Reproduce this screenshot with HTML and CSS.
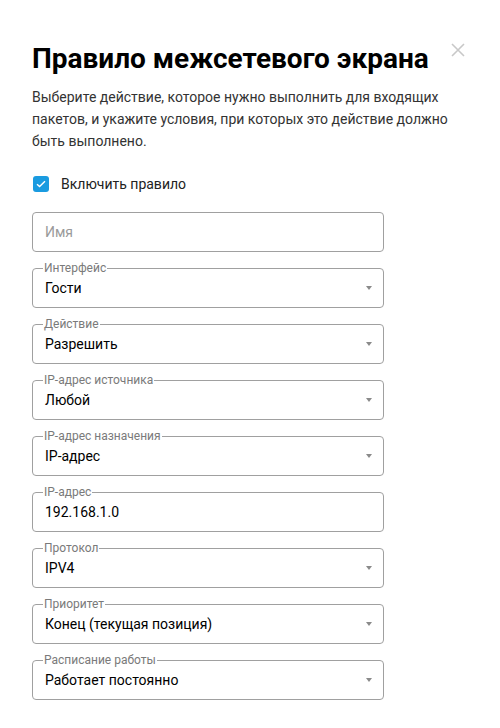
FILE: index.html
```html
<!DOCTYPE html>
<html lang="ru">
<head>
<meta charset="utf-8">
<title>Правило межсетевого экрана</title>
<link rel="stylesheet" href="styles.css">
</head>
<body>
<div class="dialog">
  <button class="close" aria-label="Закрыть">
    <svg width="14" height="14" viewBox="0 0 14 14"><path d="M1 1L13 13M13 1L1 13" stroke="#c8c8c8" stroke-width="1.6" fill="none"/></svg>
  </button>
  <h1 class="title">Правило межсетевого экрана</h1>
  <p class="desc">Выберите действие, которое нужно выполнить для входящих пакетов, и укажите условия, при которых это действие должно быть выполнено.</p>
  <label class="check">
    <span class="box"><svg width="10" height="8" viewBox="0 0 10 8"><path d="M1 4.2L3.6 6.6L9 1.2" stroke="#fff" stroke-width="1.4" fill="none"/></svg></span>
    <span>Включить правило</span>
  </label>
  <div class="fields">
    <div class="field"><span class="placeholder">Имя</span></div>
    <div class="field"><span class="legend">Интерфейс</span><span class="value">Гости</span><span class="arrow"></span></div>
    <div class="field"><span class="legend">Действие</span><span class="value">Разрешить</span><span class="arrow"></span></div>
    <div class="field"><span class="legend">IP-адрес источника</span><span class="value">Любой</span><span class="arrow"></span></div>
    <div class="field"><span class="legend">IP-адрес назначения</span><span class="value">IP-адрес</span><span class="arrow"></span></div>
    <div class="field"><span class="legend">IP-адрес</span><span class="value">192.168.1.0</span></div>
    <div class="field"><span class="legend">Протокол</span><span class="value">IPV4</span><span class="arrow"></span></div>
    <div class="field"><span class="legend">Приоритет</span><span class="value">Конец (текущая позиция)</span><span class="arrow"></span></div>
    <div class="field"><span class="legend">Расписание работы</span><span class="value">Работает постоянно</span><span class="arrow"></span></div>
  </div>
</div>
</body>
</html>
```
FILE: styles.css
```css
html, body {
  margin: 0;
  padding: 0;
  background: #fff;
}
body {
  font-family: Roboto, "Liberation Sans", sans-serif;
  color: #000;
}
.dialog {
  position: relative;
  padding: 39px 32px 0 32px;
}
.close {
  position: absolute;
  top: 43px;
  left: 451px;
  width: 14px;
  height: 14px;
  padding: 0;
  border: 0;
  background: none;
  display: flex;
}
.title {
  margin: 0;
  font-size: 28px;
  line-height: 40px;
  font-weight: 700;
  color: #000;
}
.desc {
  margin: 7px 0 0 0;
  width: 430px;
  font-size: 14px;
  line-height: 22px;
  color: #333;
}
.check {
  margin-top: 23px;
  display: flex;
  align-items: center;
  gap: 12px;
  font-size: 14px;
  color: #222;
  height: 18px;
}
.box {
  width: 16px;
  height: 16px;
  border-radius: 3px;
  background: #1a9be0;
  display: flex;
  align-items: center;
  justify-content: center;
  margin-left: 1px;
}
.fields {
  margin-top: 19px;
  width: 352px;
  display: flex;
  flex-direction: column;
  gap: 16px;
}
.field {
  position: relative;
  height: 40px;
  box-sizing: border-box;
  border: 1px solid #a0a0a0;
  border-radius: 4px;
  display: flex;
  align-items: center;
  padding: 0 12px;
  font-size: 14px;
}
.placeholder {
  color: #9a9a9a;
}
.legend {
  position: absolute;
  top: -8px;
  left: 10px;
  padding: 0 1px;
  background: #fff;
  font-size: 12px;
  line-height: 14px;
  color: #7a7a7a;
}
.value {
  color: #000;
}
.arrow {
  position: absolute;
  right: 11px;
  top: 17px;
  width: 0;
  height: 0;
  border-left: 3.5px solid transparent;
  border-right: 3.5px solid transparent;
  border-top: 4px solid #8a8a8a;
}
```
